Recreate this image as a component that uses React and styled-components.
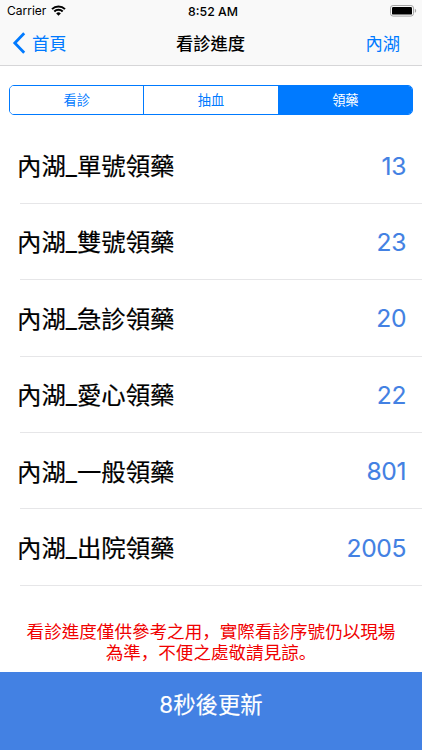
import React from "react";
import styled, { createGlobalStyle } from "styled-components";

const tabs = ["看診", "抽血", "領藥"];

const queues = [
  { name: "單號領藥", number: 13 },
  { name: "雙號領藥", number: 23 },
  { name: "急診領藥", number: 20 },
  { name: "愛心領藥", number: 22 },
  { name: "一般領藥", number: 801 },
  { name: "出院領藥", number: 2005 },
];

const App = () => {
  return (
    <Screen>
      <GlobalStyle />
      <Header>
        <StatusBar>
          <Carrier>
            Carrier
            <svg width="15" height="11" viewBox="0 0 15 11">
              <g fill="none" stroke="#000" strokeWidth="2">
                <path d="M1 4.1a9.2 9.2 0 0 1 13 0" />
                <path d="M3.3 6.5a5.9 5.9 0 0 1 8.4 0" />
              </g>
              <path d="M7.5 10.8 5.2 8.4a3.3 3.3 0 0 1 4.6 0z" />
            </svg>
          </Carrier>
          <Clock>8:52 AM</Clock>
          <Battery>
            <svg width="27" height="12" viewBox="0 0 27 12">
              <rect x=".5" y=".5" width="23" height="10.6" rx="2.6" fill="none" stroke="#a5a5a5" />
              <rect x="2" y="2" width="20" height="7.6" rx="1.2" />
              <path d="M24.8 3.8c1.8.5 1.8 3.5 0 4z" fill="#a5a5a5" />
            </svg>
          </Battery>
        </StatusBar>
        <NavBar>
          <BackButton>
            <svg width="14" height="22" viewBox="0 0 14 22">
              <path d="M12.2 1.2 2.8 11l9.4 9.8" fill="none" stroke="currentColor" strokeWidth="2.8" />
            </svg>
            首頁
          </BackButton>
          <Title>看診進度</Title>
          <BranchButton>內湖</BranchButton>
        </NavBar>
      </Header>
      <Segments>
        {tabs.map((tab) => (
          <Segment key={tab} $active={tab === "領藥"}>
            {tab}
          </Segment>
        ))}
      </Segments>
      <List>
        {queues.map((queue) => (
          <Row key={queue.name}>
            <Name>內湖_{queue.name}</Name>
            <Number>{queue.number}</Number>
          </Row>
        ))}
      </List>
      <Notice>
        看診進度僅供參考之用<Mark lang="zh-Hans">{"\uff0c"}</Mark>實際看診序號仍以現場
        <br />
        為準<Mark lang="zh-Hans">{"\uff0c"}</Mark>不便之處敬請見諒<Mark lang="zh-Hans">{"\u3002"}</Mark>
      </Notice>
      <RefreshButton>8秒後更新</RefreshButton>
    </Screen>
  );
};

const GlobalStyle = createGlobalStyle`
  * {
    box-sizing: border-box;
  }

  body {
    margin: 0;
    background: #fff;
    font-family: Inter, "Noto Sans CJK TC", sans-serif;
  }

  button {
    border: 0;
    padding: 0;
    background: none;
    color: inherit;
    font: inherit;
  }

  svg {
    display: block;
  }
`;

const Screen = styled.div`
  display: flex;
  flex-direction: column;
  width: 422px;
  height: 750px;
  overflow: hidden;
  background: #fff;
  color: #000;
`;

const Header = styled.header`
  height: 66px;
  background: #f9f9f9;
  border-bottom: 1px solid #d6d6d8;
`;

const StatusBar = styled.div`
  display: grid;
  grid-template-columns: 1fr auto 1fr;
  align-items: center;
  height: 21px;
  padding: 0 5px 0 7px;
  font-size: 12px;
`;

const Carrier = styled.div`
  display: flex;
  align-items: center;
  gap: 5px;
`;

const Clock = styled.div`
  padding-left: 2px;
  padding-top: 1px;
  font-size: 12.3px;
  font-weight: 500;
`;

const Battery = styled.div`
  justify-self: end;
`;

const NavBar = styled.nav`
  display: grid;
  grid-template-columns: 1fr auto 1fr;
  align-items: center;
  height: 43px;
  padding: 0 22px 0 12px;
  font-size: 17.3px;
`;

const BackButton = styled.button`
  display: flex;
  align-items: center;
  gap: 6px;
  color: #007aff;
`;

const Title = styled.div`
  padding-left: 9px;
  font-weight: 500;
`;

const BranchButton = styled.button`
  justify-self: end;
  color: #007aff;
`;

const Segments = styled.div`
  display: flex;
  flex: none;
  height: 30px;
  margin: 19px 9px 0;
  border: 1px solid #007aff;
  border-radius: 5px;
  overflow: hidden;
`;

const Segment = styled.button`
  flex: 1;
  padding-bottom: 2px;
  background: ${(props) => (props.$active ? "#007aff" : "#fff")};
  color: ${(props) => (props.$active ? "#fff" : "#007aff")};
  font-size: 13.2px;

  & + & {
    border-left: 1px solid #007aff;
  }
`;

const List = styled.ul`
  list-style: none;
  margin: 12.4px 0 0;
  padding: 0;
`;

const Row = styled.li`
  display: flex;
  align-items: center;
  justify-content: space-between;
  height: 76.4px;
  padding: 0 16px 0 17px;
  background: linear-gradient(#e6e6e8, #e6e6e8) 20px 100% / 100% 1px no-repeat;
`;

const Name = styled.span`
  padding-bottom: 2px;
  font-size: 24.4px;
  -webkit-text-stroke: 0.2px #000;
`;

const Number = styled.span`
  color: #4381e3;
  font-size: 24.6px;
  letter-spacing: -0.4px;
  -webkit-text-stroke: 0.1px #4381e3;
`;

const Notice = styled.p`
  margin: 35px 0 0;
  color: #f00000;
  font-size: 17.57px;
  line-height: 20.6px;
  text-align: center;
  white-space: nowrap;
`;

const Mark = styled.span`
  font-family: "Noto Sans CJK SC", sans-serif;
`;

const RefreshButton = styled.button`
  flex: none;
  height: 78px;
  margin-top: auto;
  padding-bottom: 17px;
  background: #4381e3;
  color: #fff;
  font-size: 22.4px;
  -webkit-text-stroke: 0.15px #fff;
`;

export default App;
